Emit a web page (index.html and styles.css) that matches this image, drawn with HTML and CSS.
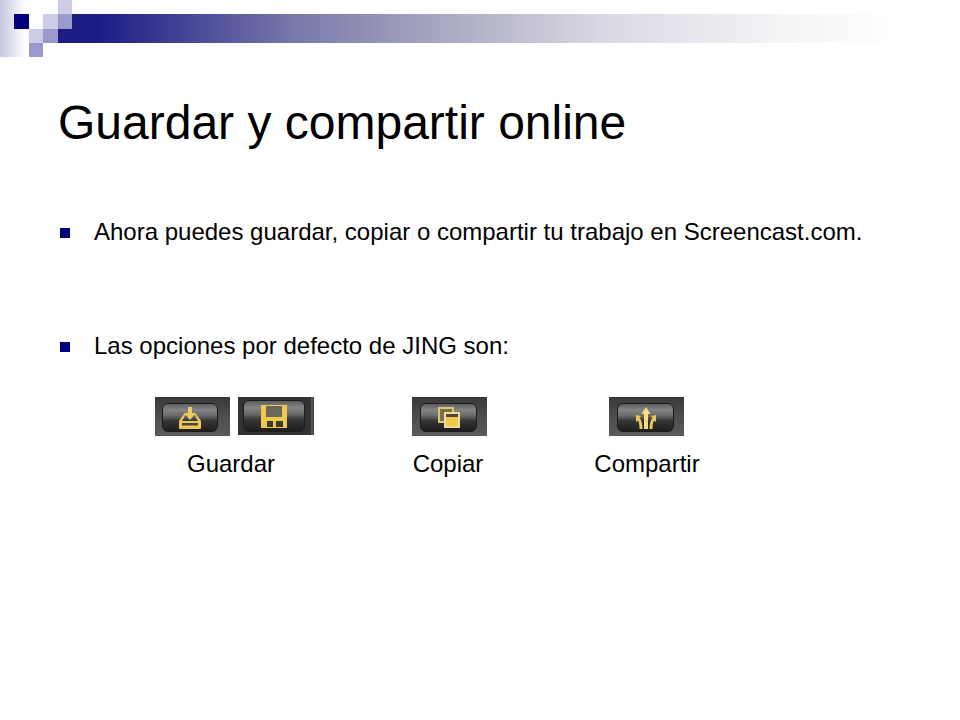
FILE: index.html
```html
<!DOCTYPE html>
<html lang="es">
<head>
<meta charset="utf-8">
<title>Guardar y compartir online</title>
<link rel="stylesheet" href="styles.css">
</head>
<body>
<div class="slide">
  <div class="decor" aria-hidden="true">
    <div class="fade"></div>
    <div class="bar"></div>
    <div class="sq navy s1"></div>
    <div class="sq light s2"></div>
    <div class="sq light s3"></div>
    <div class="sq mid s4"></div>
    <div class="sq light s5"></div>
    <div class="sq mid s6"></div>
    <div class="sq mid s7"></div>
  </div>
  <h1 class="title">Guardar y compartir online</h1>
  <ul class="bullets">
    <li class="item first">Ahora puedes guardar, copiar o compartir tu trabajo en Screencast.com.</li>
    <li class="item second">Las opciones por defecto de JING son:</li>
  </ul>
  <div class="buttons">
    <div class="btn b1"><div class="face"><svg class="ico" viewBox="0 0 24 22"><path d="M12 0v8" fill="none" stroke="#f0cc60" stroke-width="4"/><path d="M6 6h12l-6 7z" fill="#f0cc60"/><path d="M6 7 1 14v7q0 1 1 1h20q1 0 1-1v-7l-5-7h-2l4 7H4l4-7z" fill="#eec75c"/><rect x="4" y="16" width="16" height="2.500" fill="#4a4639"/></svg></div></div>
    <div class="btn b2"><div class="face"><svg class="ico" viewBox="0 0 26 23"><path d="M0 0h26v23H0z" fill="#f0c850"/><rect x="5" y="1" width="16" height="11" fill="#6a665a"/><rect x="6" y="16" width="6" height="6" fill="#3a3830"/><rect x="15" y="16" width="7" height="6" fill="#3a3830"/></svg></div></div>
    <div class="btn b3"><div class="face"><svg class="ico" viewBox="0 0 22 21"><rect x="1" y="1" width="14" height="14" fill="#7a7048" stroke="#d8c47c" stroke-width="2"/><rect x="7" y="6" width="14" height="14" fill="#f0c850" stroke="#f2dc9a" stroke-width="2"/><rect x="8" y="7" width="12" height="3" fill="#4a4639"/></svg></div></div>
    <div class="btn b4"><div class="face"><svg class="ico" viewBox="0 0 22 22"><path d="M11 0 6.500 7H9v15h4V7h2.500z" fill="#f4dc80"/><path d="M1 8l5 1-1.500 2C6.500 13 7.500 17 7.500 22H4.500C4.500 18 4 15 3 13.500L1 15zM21 8l-5 1 1.500 2C15.500 13 14.500 17 14.500 22h3c0-4 .5-7 1.500-8.500L21 15z" fill="#eec75c"/></svg></div></div>
  </div>
  <div class="labels">
    <span class="label l1">Guardar</span>
    <span class="label l2">Copiar</span>
    <span class="label l3">Compartir</span>
  </div>
</div>
</body>
</html>
```
FILE: styles.css
```css
* { box-sizing: border-box; }
html, body { margin: 0; padding: 0; background: #fff; }
.slide {
  position: relative;
  width: 960px;
  height: 720px;
  overflow: hidden;
  padding: 93px 0 0 58px;
  font-family: "Liberation Sans", Arial, sans-serif;
  color: #000;
}
.decor { position: absolute; inset: 0; }
.fade { position: absolute; left: 0; top: 0; width: 26px; height: 57px; background: linear-gradient(90deg, #c6c6e2, #fff); }
.bar {
  position: absolute;
  left: 58px;
  top: 14px;
  width: 902px;
  height: 29px;
  background: linear-gradient(90deg, #1c1c84 0, #1c1c84 40px, #7b7bab 242px, #b4b4c8 422px, #d8d8e4 542px, #f4f4f6 722px, #fff 840px);
}
.sq { position: absolute; width: 15px; height: 15px; }
.navy { background: #00007f; }
.light { background: #ccccE6; }
.mid { background: #9999cc; }
.s1 { left: 14px; top: 14px; }
.s2 { left: 43px; top: 14px; }
.s3 { left: 58px; top: 0; width: 14px; height: 14px; }
.s4 { left: 58px; top: 14px; width: 14px; }
.s5 { left: 29px; top: 29px; width: 14px; height: 14px; }
.s6 { left: 43px; top: 29px; height: 14px; }
.s7 { left: 29px; top: 43px; width: 14px; height: 14px; }
.title { position: relative; margin: 0; font-size: 48px; line-height: 60px; font-weight: 400; }
.bullets { position: relative; list-style: none; margin: 67px 0 0; padding: 0 0 0 36px; }
.item { position: relative; font-size: 24px; line-height: 24px; white-space: nowrap; }
.item::before { content: ""; position: absolute; left: -34px; top: 8px; width: 10px; height: 10px; background: #00007f; }
.second { margin-top: 90px; }
.buttons { position: relative; height: 40px; margin: 39px 0 0; display: flex; align-items: flex-start; padding-left: 97px; }
.btn { width: 75px; height: 39px; background: linear-gradient(#383838, #4c4c4c 45%, #5a5a5a 100%); padding: 6px 10px 4px 8px; }
.b1 { margin-right: 8px; padding: 6px 12px 4px 7px; }
.b2 { margin-right: 98px; background: linear-gradient(90deg, #333 96%, #666 97%, #333 100%); padding: 3px 9px 3px 5px; width: 76px; height: 38px; }
.b3 { margin-right: 122px; }
.face {
  height: 100%;
  border-radius: 6px;
  border: 1px solid #1c1c1c;
  background: linear-gradient(#5e5e5e, #848484 22%, #686868 44%, #363636 62%, #1e1e1e);
  display: flex;
  align-items: center;
  justify-content: center;
}
.ico { width: 24px; height: 22px; display: block; filter: blur(0.4px); }
.b2 .ico { width: 26px; height: 23px; }
.b3 .ico { width: 22px; height: 21px; }
.b4 .ico { width: 22px; height: 22px; }
.labels { position: relative; height: 28px; margin-top: 13px; font-size: 24px; line-height: 28px; }
.label { position: absolute; top: 0; transform: translateX(-50%); }
.l1 { left: 173px; }
.l2 { left: 390px; }
.l3 { left: 589px; }
```
